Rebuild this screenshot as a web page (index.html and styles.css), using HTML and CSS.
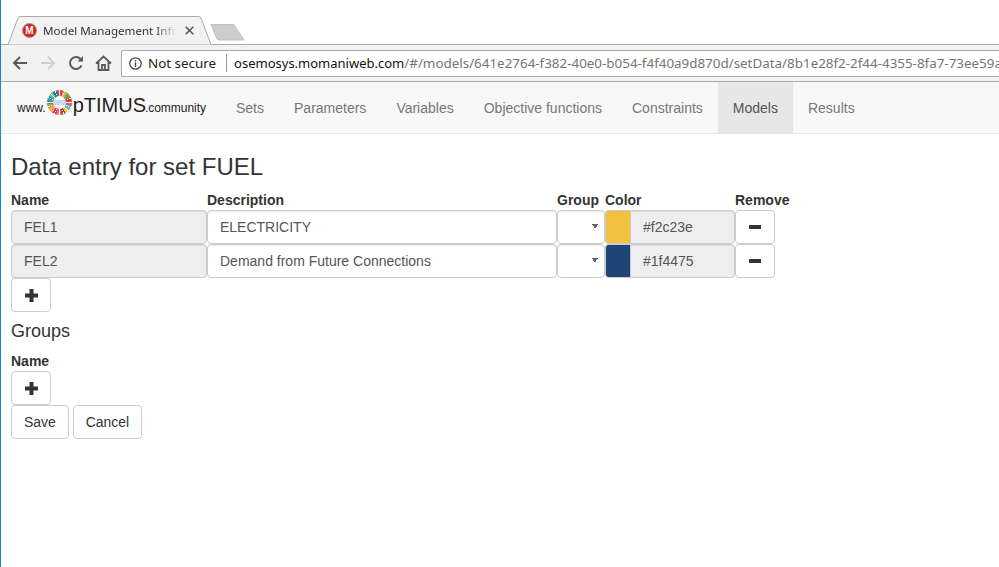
FILE: index.html
```html
<!DOCTYPE html>
<html lang="en">
<head>
    <meta charset="UTF-8">
    <meta name="viewport" content="width=device-width, initial-scale=1.0">
    <title>Model Management Infrastructure</title>
    <link rel="stylesheet" href="styles.css">
</head>
<body>
    <!-- browser window top -->
    <div class="tabstrip">
        <div class="tab">
            <svg class="tab-shape" width="205" height="29" viewBox="0 0 205 29">
                <path d="M0 28.500 H1 L11 2 Q12 .5 14 .5 H191 Q193 .5 194 2 L204 28.500 H205" fill="#f2f2f2" stroke="#aaa"/>
            </svg>
            <span class="favicon">M</span>
            <span class="tab-title">Model Management Infra</span>
            <svg class="tab-close" width="9" height="9" viewBox="0 0 9 9">
                <path d="M.7 .7 L8.300 8.300 M8.300 .7 L.7 8.300" stroke="#555" stroke-width="1.600"/>
            </svg>
        </div>
        <svg class="newtab" width="36" height="19" viewBox="0 0 36 19">
            <path d="M1 1.500 H24 L34 17 H9 Q7.500 17 7 16 Z" fill="#cdcdcd" stroke="#c2c2c2"/>
        </svg>
    </div>
    <div class="toolbar">
        <svg class="tool" width="16" height="16" viewBox="0 0 16 16">
            <path d="M15 8 H2 M8 2 L2 8 L8 14" fill="none" stroke="#5a5a5a" stroke-width="2"/>
        </svg>
        <svg class="tool" width="16" height="16" viewBox="0 0 16 16">
            <path d="M1 8 H14 M8 2 L14 8 L8 14" fill="none" stroke="#cfcfcf" stroke-width="2"/>
        </svg>
        <svg class="tool" width="16" height="16" viewBox="0 0 16 16">
            <path d="M13.500 10.500 A6 6 0 1 1 12.500 4" fill="none" stroke="#5a5a5a" stroke-width="2"/>
            <path d="M9.500 6.500 H15 V1 Z" fill="#5a5a5a"/>
        </svg>
        <svg class="tool" width="17" height="16" viewBox="0 0 17 16">
            <path d="M1 8.500 L8.500 1.500 L16 8.500 M3.500 7 V15 H13.500 V7 M7 15 V10 H10 V15" fill="none" stroke="#5a5a5a" stroke-width="1.800"/>
        </svg>
        <div class="omnibox">
            <svg class="info" width="13" height="13" viewBox="0 0 13 13">
                <circle cx="6.500" cy="6.500" r="5.700" fill="none" stroke="#444" stroke-width="1.300"/>
                <path d="M6.500 5.500 V10 M6.500 3 V4.400" stroke="#444" stroke-width="1.400"/>
            </svg>
            <span class="secure">Not secure</span>
            <span class="url"><span class="host">osemosys.momaniweb.com</span>/#/models/641e2764-f382-40e0-b054-f4f40a9d870d/setData/8b1e28f2-2f44-4355-8fa7-73ee59a</span>
        </div>
    </div>

    <!-- app -->
    <nav class="navbar">
        <a class="brand" href="#">
            <span class="brand-small">www.</span>
            <span class="logo"><span class="logo-mid"></span></span>
            <span class="brand-big">pTIMUS</span>
            <span class="brand-small community">.community</span>
        </a>
        <a class="nav-link" href="#">Sets</a>
        <a class="nav-link" href="#">Parameters</a>
        <a class="nav-link" href="#">Variables</a>
        <a class="nav-link" href="#">Objective functions</a>
        <a class="nav-link" href="#">Constraints</a>
        <a class="nav-link active" href="#">Models</a>
        <a class="nav-link" href="#">Results</a>
    </nav>

    <main class="content">
        <h3>Data entry for set FUEL</h3>
        <div class="set-table">
            <b>Name</b>
            <b>Description</b>
            <b>Group</b>
            <b>Color</b>
            <b>Remove</b>

            <input class="field" type="text" value="FEL1" readonly>
            <input class="field editable" type="text" value="ELECTRICITY">
            <select class="field editable group-select"><option></option></select>
            <div class="color-field">
                <span class="swatch yellow"></span>
                <input class="field" type="text" value="#f2c23e" readonly>
            </div>
            <button class="btn" type="button">
                <svg width="12" height="4" viewBox="0 0 12 4"><rect width="12" height="4" fill="#333"/></svg>
            </button>

            <input class="field" type="text" value="FEL2" readonly>
            <input class="field editable" type="text" value="Demand from Future Connections">
            <select class="field editable group-select"><option></option></select>
            <div class="color-field">
                <span class="swatch blue"></span>
                <input class="field" type="text" value="#1f4475" readonly>
            </div>
            <button class="btn" type="button">
                <svg width="12" height="4" viewBox="0 0 12 4"><rect width="12" height="4" fill="#333"/></svg>
            </button>
        </div>
        <button class="btn add" type="button">
            <svg width="13" height="13" viewBox="0 0 13 13"><path d="M4.500 0 H8.500 V4.500 H13 V8.500 H8.500 V13 H4.500 V8.500 H0 V4.500 H4.500 Z" fill="#333"/></svg>
        </button>

        <h4>Groups</h4>
        <b class="group-label">Name</b>
        <button class="btn add" type="button">
            <svg width="13" height="13" viewBox="0 0 13 13"><path d="M4.500 0 H8.500 V4.500 H13 V8.500 H8.500 V13 H4.500 V8.500 H0 V4.500 H4.500 Z" fill="#333"/></svg>
        </button>

        <div class="actions">
            <button class="btn" type="button">Save</button>
            <button class="btn cancel" type="button">Cancel</button>
        </div>
    </main>
</body>
</html>
```

FILE: styles.css
```css
* {
    box-sizing: border-box;
}
body {
    margin: 0;
    height: 567px;
    overflow: hidden;
    border-left: 1px solid #0f86e8;
    background-color: #fff;
    font-family: "Liberation Sans", Arial, sans-serif;
    font-size: 14px;
    color: #333;
}

/* browser chrome */
.tabstrip {
    display: flex;
    height: 45px;
    padding-left: 6px;
    border-bottom: 1px solid #aaa;
    font-family: "Noto Sans", sans-serif;
}
.tab {
    position: relative;
    display: flex;
    align-items: center;
    flex: none;
    width: 205px;
    height: 29px;
    margin-top: 16px;
    padding: 0 0 0 15px;
}
.tab-shape {
    position: absolute;
    left: 0;
    top: 0;
}
.favicon {
    position: relative;
    flex: none;
    width: 15px;
    height: 15px;
    border-radius: 50%;
    border: 1px solid #999;
    background-color: #d9201f;
    color: #fff;
    font: bold 10px/13px "Liberation Sans", sans-serif;
    text-align: center;
}
.tab-title {
    position: relative;
    width: 134px;
    margin-left: 6px;
    overflow: hidden;
    white-space: nowrap;
    font-size: 11.600px;
    color: #333;
    -webkit-mask-image: linear-gradient(to right, #000 112px, transparent 134px);
}
.tab-close {
    position: relative;
    margin-left: 8px;
}
.newtab {
    flex: none;
    margin: 23px 0 0 -2px;
}
.toolbar {
    display: flex;
    align-items: center;
    height: 37px;
    padding: 0 0 0 11px;
    background-color: #f2f2f2;
    border-bottom: 1px solid #aaa;
}
.tool {
    flex: none;
    margin-right: 12px;
}
.tool:nth-child(3) {
    margin-right: 11px;
}
.tool:nth-child(4) {
    margin-right: 9px;
}
.omnibox {
    display: flex;
    align-items: center;
    flex: 1;
    min-width: 0;
    height: 27px;
    padding-left: 7px;
    background-color: #fff;
    border: 1px solid #aaa;
    border-right: 0;
    border-radius: 2px 0 0 2px;
    font-family: "Noto Sans", sans-serif;
    font-size: 13.400px;
    white-space: nowrap;
    overflow: hidden;
}
.info {
    flex: none;
}
.secure {
    margin-left: 6px;
    padding-right: 10px;
    border-right: 1px solid #999;
    line-height: 18px;
    color: #222;
}
.url {
    margin-left: 7px;
    color: #757575;
}
.host {
    font-size: 13px;
    color: #111;
}

/* navbar */
.navbar {
    display: flex;
    height: 52px;
    background-color: #f8f8f8;
    border-bottom: 1px solid #e7e7e7;
    border-radius: 4px 0 0 0;
}
.brand {
    display: flex;
    align-items: baseline;
    width: 220px;
    padding: 12px 0 0 16px;
    color: #222;
    text-decoration: none;
}
.brand-small {
    font-size: 12px;
}
.community {
    margin-left: -1px;
    letter-spacing: -.05px;
}
.brand-big {
    font-size: 20px;
}
.logo {
    position: relative;
    display: block;
    align-self: flex-start;
    width: 25px;
    height: 25px;
    margin: -4px 1px 0 1px;
    border-radius: 50%;
    opacity: .85;
    background:
        repeating-conic-gradient(#fff 0 3deg, transparent 3deg 22.500deg),
        conic-gradient(#e5243b 0 18deg, #dda63a 18deg 40deg, #4c9f38 40deg 62deg, #c5192d 62deg 84deg, #ff3a21 84deg 106deg, #26bde2 106deg 128deg, #fcc30b 128deg 150deg, #a21942 150deg 172deg, #fd6925 172deg 194deg, #dd1367 194deg 216deg, #fd9d24 216deg 238deg, #bf8b2e 238deg 260deg, #3f7e44 260deg 282deg, #0a97d9 282deg 304deg, #56c02b 304deg 326deg, #00689d 326deg 348deg, #e5243b 348deg);
}
.logo-mid {
    position: absolute;
    left: 6px;
    top: 6px;
    width: 13px;
    height: 13px;
    border-radius: 50%;
    background: linear-gradient(#fff 4px, #bcd6ee 4px, #bcd6ee 9px, #fff 9px);
}
.nav-link {
    padding: 16px 15px 0;
    line-height: 20px;
    color: #777;
    text-decoration: none;
}
.nav-link.active {
    background-color: #e7e7e7;
    color: #555;
}

/* page */
.content {
    padding: 0 10px;
}
h3 {
    margin: 20px 0 10px;
    font-size: 24px;
    font-weight: 500;
    line-height: 1.1;
}
h4 {
    margin: 10px 0;
    font-size: 18px;
    font-weight: 500;
    line-height: 1.1;
}
.set-table {
    display: grid;
    grid-template-columns: 196px 350px 48px 130px 40px;
    grid-auto-rows: 34px;
    grid-template-rows: 20px;
    width: 764px;
    line-height: 20px;
}
.field {
    width: 100%;
    height: 34px;
    padding: 6px 12px;
    background-color: #eee;
    border: 1px solid #ccc;
    border-radius: 4px;
    box-shadow: inset 0 1px 1px rgba(0, 0, 0, .075);
    font-family: inherit;
    font-size: 14px;
    color: #555;
}
.editable {
    background-color: #fff;
}
.group-select {
    appearance: none;
    background-image:
        linear-gradient(to top right, transparent 50%, #666 50%),
        linear-gradient(to top left, transparent 50%, #666 50%);
    background-size: 3px 5px;
    background-position: 34px 13px, 37px 13px;
    background-repeat: no-repeat;
}
.color-field {
    display: flex;
}
.swatch {
    flex: none;
    width: 25px;
    border: 1px solid #ccc;
    border-right: 0;
    border-radius: 4px 0 0 4px;
}
.swatch.yellow {
    background-color: #f2c23e;
}
.swatch.blue {
    background-color: #1f4475;
}
.color-field .field {
    border-radius: 0 4px 4px 0;
}
.btn {
    display: inline-flex;
    align-items: center;
    justify-content: center;
    height: 34px;
    padding: 6px 12px;
    background-color: #fff;
    border: 1px solid #ccc;
    border-radius: 4px;
    font-family: inherit;
    font-size: 14px;
    color: #333;
}
.add {
    display: flex;
    width: 40px;
}
.cancel {
    width: 69px;
    padding: 6px 0;
}
.group-label {
    display: block;
    line-height: 19px;
}
.actions {
    display: flex;
    gap: 4px;
}
```
